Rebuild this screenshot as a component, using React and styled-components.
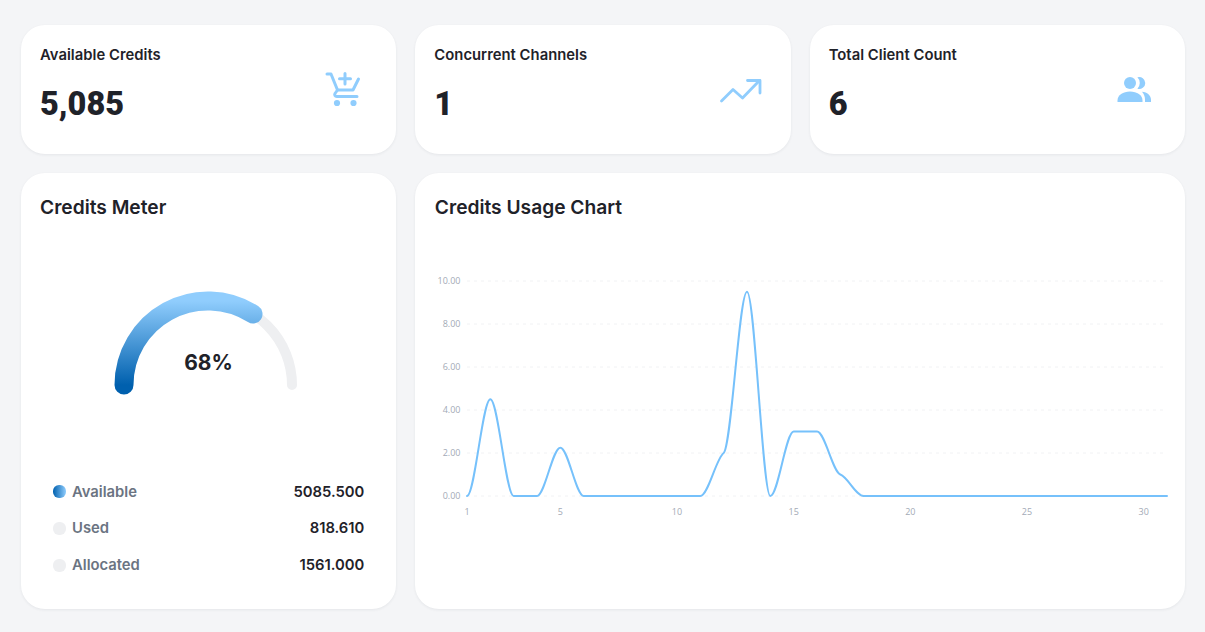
import React from "react";
import styled, { createGlobalStyle } from "styled-components";

const Global = createGlobalStyle`
  html, body { margin: 0; padding: 0; background: #f4f5f7; }
  body { font-family: "Inter", "Liberation Sans", sans-serif; color: #1f2229; }
  * { box-sizing: border-box; }
`;

const Page = styled.div`
  width: 1205px;
  height: 632px;
  padding: 25px 20px 23px 21px;
  display: grid;
  grid-template-columns: repeat(3, 1fr);
  grid-template-rows: 129px 436px;
  gap: 19px;
`;

const Card = styled.section`
  background: #fff;
  border-radius: 24px;
  box-shadow: 0 1px 3px rgba(30, 40, 60, 0.07);
  padding: 19px;
  min-width: 0;
`;

const StatCard = styled(Card)`
  display: flex;
  justify-content: space-between;
  padding: 21px 19px 0 19px;
`;

const StatLabel = styled.div`
  font-size: 14.8px;
  font-weight: 600;
  line-height: 18px;
  letter-spacing: 0.03px;
`;

const StatValue = styled.div`
  font-family: "Roboto", "Liberation Sans", sans-serif;
  font-size: 32.5px;
  font-weight: 900;
  line-height: 40px;
  margin-top: 20px;
`;

const IconSlot = styled.div`
  width: ${(p) => p.$w}px;
  height: 44px;
  margin-top: ${(p) => p.$top}px;
  margin-right: ${(p) => p.$right}px;
  svg { display: block; }
`;

const CardTitle = styled.h2`
  margin: 0;
  font-size: 19.2px;
  font-weight: 600;
  line-height: 24px;
  padding-top: 1px;
`;

const MeterCard = styled(Card)`
  display: flex;
  flex-direction: column;
  padding: 21px 19px 33.5px 19px;
`;

const ChartCard = styled(Card)`
  grid-column: span 2;
  padding: 21px 19px 0 19.5px;
`;

const GaugeWrap = styled.div`
  margin-top: 71px;
  padding-right: 1px;
  display: flex;
  justify-content: center;
  svg { display: block; }
`;

const Legend = styled.div`
  margin-top: auto;
  padding: 0 13px;
  display: flex;
  flex-direction: column;
  gap: 15.7px;
`;

const LegendRow = styled.div`
  display: flex;
  align-items: center;
  height: 21px;
  font-size: 14.8px;
  font-weight: 600;
`;

const Swatch = styled.span`
  width: 13px;
  height: 13px;
  border-radius: 6px;
  margin-right: 6px;
  background: ${(p) => (p.$on ? "linear-gradient(90deg,#0060ae,#90cdfd)" : "#eeeff1")};
`;

const LegendName = styled.span`
  flex: 1;
  color: #6b7482;
`;

const LegendValue = styled.span`
  color: #1f2229;
`;

const ChartWrap = styled.div`
  margin-top: 52px;
  svg { display: block; }
`;

const CartIcon = () => (
  <svg width="44" height="44" viewBox="0 0 44 44" fill="none" stroke="#90cdfd" strokeWidth="3" strokeLinecap="round" strokeLinejoin="round">
    <path d="M2 4h4l6.500 16h15.500l5.500-11" />
    <path d="M12.500 20l-2.500 3.500c-.8 1.500 0 3 1.800 3h20.200" />
    <path d="M20 3.500v10.500M14.500 8.700h11" />
    <circle cx="12" cy="33" r="3.100" fill="#90cdfd" stroke="none" />
    <circle cx="28.500" cy="33" r="3.100" fill="#90cdfd" stroke="none" />
  </svg>
);

const TrendIcon = () => (
  <svg width="44" height="44" viewBox="0 0 44 44" fill="none" stroke="#90cdfd" strokeWidth="2.8" strokeLinecap="round" strokeLinejoin="round">
    <path d="M2.500 30l11.500-11.500 9.500 8.500 17-17.500" />
    <path d="M28.500 9.500h12.500v12.500" />
  </svg>
);

const UsersIcon = () => (
  <svg width="44" height="44" viewBox="0 0 44 44" fill="#90cdfd">
    <circle cx="15" cy="11" r="6" />
    <path d="M22.400 5.300a6 6 0 1 1 0 11.400a8 8 0 0 0 0-11.400z" />
    <path d="M2.500 30v-1.500c0-5.500 5.500-9 12.500-9s12.500 3.500 12.500 9v1.500z" />
    <path d="M27 19.800c5.200.6 9 3.500 9 8v2.200h-6v-2c0-3.300-1-6-3-8.200z" />
  </svg>
);

const Gauge = () => {
  const cx = 98, cy = 95, r = 84;
  const a = (Math.PI * (180 - 122.4)) / 180;
  const ex = cx + r * Math.cos(a);
  const ey = cy - r * Math.sin(a);
  return (
    <svg width="196" height="116" viewBox="0 0 196 116" fill="none">
      <defs>
        <linearGradient id="gaugeFill" x1="0" y1="0" x2="0" y2="1">
          <stop offset="0" stopColor="#90cdfd" />
          <stop offset="1" stopColor="#0060ae" />
        </linearGradient>
      </defs>
      <path d={`M${cx - r} ${cy}A${r} ${r} 0 0 1 ${cx + r} ${cy}`} stroke="#eeeff1" strokeWidth="10" strokeLinecap="round" />
      <path d={`M${cx - r} ${cy}A${r} ${r} 0 0 1 ${ex} ${ey}`} stroke="url(#gaugeFill)" strokeWidth="19" strokeLinecap="round" />
      <text x={cx + 0.5} y={80} textAnchor="middle" fontFamily="Inter, sans-serif" fontSize="21" fontWeight="700" fill="#1f2229">68%</text>
    </svg>
  );
};

const data = [0, 4.5, 0, 0, 2.25, 0, 0, 0, 0, 0, 0, 2, 9.5, 0, 3, 3, 1, 0, 0, 0, 0, 0, 0, 0, 0, 0, 0, 0, 0, 0, 0];
const X0 = 32, STEP = 700 / 30, Y0 = 225, UNIT = 21.5;
const px = (i) => X0 + i * STEP;
const py = (v) => Y0 - v * UNIT;

function monotonePath(vals) {
  const n = vals.length;
  const ys = vals.map(py);
  const s = [];
  for (let i = 0; i < n - 1; i++) s.push((ys[i + 1] - ys[i]) / STEP);
  const t = new Array(n).fill(0);
  for (let i = 1; i < n - 1; i++) {
    if (s[i - 1] * s[i] > 0) {
      t[i] = Math.sign(s[i]) * Math.min(Math.abs(s[i - 1]), Math.abs(s[i])) * 0.4;
    }
  }
  let d = `M${px(0)} ${ys[0]}`;
  for (let i = 0; i < n - 1; i++) {
    const h = STEP / 3;
    d += `C${px(i) + h} ${ys[i] + t[i] * h} ${px(i + 1) - h} ${ys[i + 1] - t[i + 1] * h} ${px(i + 1)} ${ys[i + 1]}`;
  }
  return d;
}

const AxisText = styled.text`
  font-family: "Open Sans", sans-serif;
  font-size: 9px;
  fill: #a3aab6;
`;

const Chart = () => (
  <svg width="745" height="260" viewBox="0 0 745 260" fill="none">
    {[0, 2, 4, 6, 8, 10].map((v) => (
      <g key={v}>
        <line x1={X0} x2={X0 + 700} y1={py(v)} y2={py(v)} stroke="#f1f2f4" strokeWidth="1" strokeDasharray="3 4" />
        <AxisText x={25.500} y={py(v) + 3} textAnchor="end">{v.toFixed(2)}</AxisText>
      </g>
    ))}
    {[1, 5, 10, 15, 20, 25, 30].map((d) => (
      <AxisText key={d} x={px(d - 1)} y={244} textAnchor="middle">{d}</AxisText>
    ))}
    <path d={monotonePath(data)} stroke="#76c1fb" strokeWidth="2" strokeLinecap="round" />
  </svg>
);

const stats = [
  { label: "Available Credits", value: "5,085", icon: <CartIcon />, w: 44, top: 24, right: 8 },
  { label: "Concurrent Channels", value: "1", icon: <TrendIcon />, w: 44, top: 25, right: 9 },
  { label: "Total Client Count", value: "6", icon: <UsersIcon />, w: 44, top: 26, right: 7 },
];

const legend = [
  { name: "Available", value: "5085.500", on: true },
  { name: "Used", value: "818.610" },
  { name: "Allocated", value: "1561.000" },
];

export default function App() {
  return (
    <>
      <Global />
      <Page>
        {stats.map((s) => (
          <StatCard key={s.label}>
            <div>
              <StatLabel>{s.label}</StatLabel>
              <StatValue>{s.value}</StatValue>
            </div>
            <IconSlot $w={s.w} $top={s.top} $right={s.right}>{s.icon}</IconSlot>
          </StatCard>
        ))}
        <MeterCard>
          <CardTitle>Credits Meter</CardTitle>
          <GaugeWrap><Gauge /></GaugeWrap>
          <Legend>
            {legend.map((l) => (
              <LegendRow key={l.name}>
                <Swatch $on={l.on} />
                <LegendName>{l.name}</LegendName>
                <LegendValue>{l.value}</LegendValue>
              </LegendRow>
            ))}
          </Legend>
        </MeterCard>
        <ChartCard>
          <CardTitle>Credits Usage Chart</CardTitle>
          <ChartWrap><Chart /></ChartWrap>
        </ChartCard>
      </Page>
    </>
  );
}
